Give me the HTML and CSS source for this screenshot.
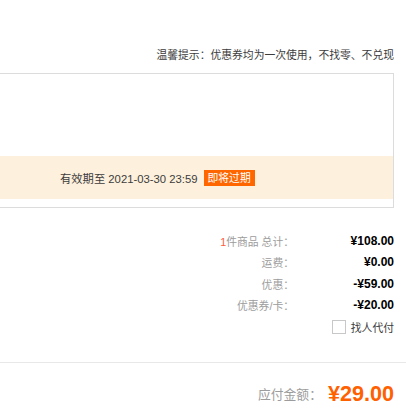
FILE: index.html
```html
<!DOCTYPE html>
<html lang="zh-CN">
<head>
<meta charset="utf-8">
<title>订单确认</title>
<link rel="stylesheet" href="styles.css">
</head>
<body>
<div class="wrap">
  <div class="tip">温馨提示：优惠券均为一次使用，不找零、不兑现</div>
  <div class="coupon-box">
    <div class="band">
      <span class="expire">有效期至 2021-03-30 23:59</span>
      <span class="badge">即将过期</span>
    </div>
  </div>
  <div class="summary">
    <div class="row"><span class="label"><em class="count">1</em>件商品 总计：</span><span class="value">¥108.00</span></div>
    <div class="row"><span class="label">运费：</span><span class="value">¥0.00</span></div>
    <div class="row"><span class="label">优惠：</span><span class="value">-¥59.00</span></div>
    <div class="row"><span class="label">优惠券/卡：</span><span class="value">-¥20.00</span></div>
    <div class="row">
      <label class="pay-other"><span class="checkbox"></span><span class="pay-text">找人代付</span></label>
    </div>
  </div>
</div>
<div class="divider"></div>
<div class="total-wrap">
  <div class="total">
    <span class="total-label">应付金额：</span><span class="total-price">¥29.00</span>
  </div>
</div>
</body>
</html>
```

FILE: styles.css
```css
html, body {
  margin: 0;
  padding: 0;
  background: #fff;
}

body {
  width: 406px;
  height: 410px;
  overflow: hidden;
  font-family: "Liberation Sans", "Noto Sans CJK SC", sans-serif;
  color: #3c3c3c;
}

.wrap {
  padding: 46px 12px 0 0;
}

.tip {
  text-align: right;
  font-size: 10.8px;
  line-height: 18px;
  color: #3c3c3c;
}

.coupon-box {
  margin-top: 9px;
  border: 1px solid #dcdcdc;
  border-left: none;
  padding: 82px 0 8px 0;
}

.band {
  display: flex;
  align-items: center;
  height: 43px;
  padding-left: 60px;
  background: #fdf0dc;
  font-size: 10.8px;
  color: #3c3c3c;
}

.expire {
  font-size: 11.3px;
}

.badge {
  margin-left: 6px;
  height: 16px;
  line-height: 16px;
  padding: 0 4px;
  background: #ff6600;
  color: #fff;
  font-size: 10.8px;
}

.summary {
  padding-top: 22px;
}

.row {
  display: flex;
  justify-content: flex-end;
  align-items: center;
  height: 21.5px;
}

.label {
  color: #9c9c9c;
  font-size: 10.8px;
  text-align: right;
}

.count {
  font-style: normal;
  color: #ff5a3c;
}

.value {
  width: 100px;
  text-align: right;
  font-weight: bold;
  font-size: 12px;
  color: #000;
}

.pay-other {
  display: flex;
  align-items: center;
}

.checkbox {
  width: 12px;
  height: 12px;
  border: 1px solid #c8c8c8;
  background: #fff;
  margin-right: 5px;
}

.pay-text {
  font-size: 10.8px;
  color: #3c3c3c;
}

.divider {
  margin-top: 24px;
  height: 1px;
  background: #e8e8e8;
}

.total-wrap {
  padding: 16px 12px 0 0;
}

.total {
  display: flex;
  justify-content: flex-end;
  align-items: center;
  height: 30px;
}

.total-label {
  font-size: 12.8px;
  color: #9c9c9c;
  margin-right: 6px;
}

.total-price {
  font-size: 21.6px;
  font-weight: bold;
  color: #ff6000;
}
```
